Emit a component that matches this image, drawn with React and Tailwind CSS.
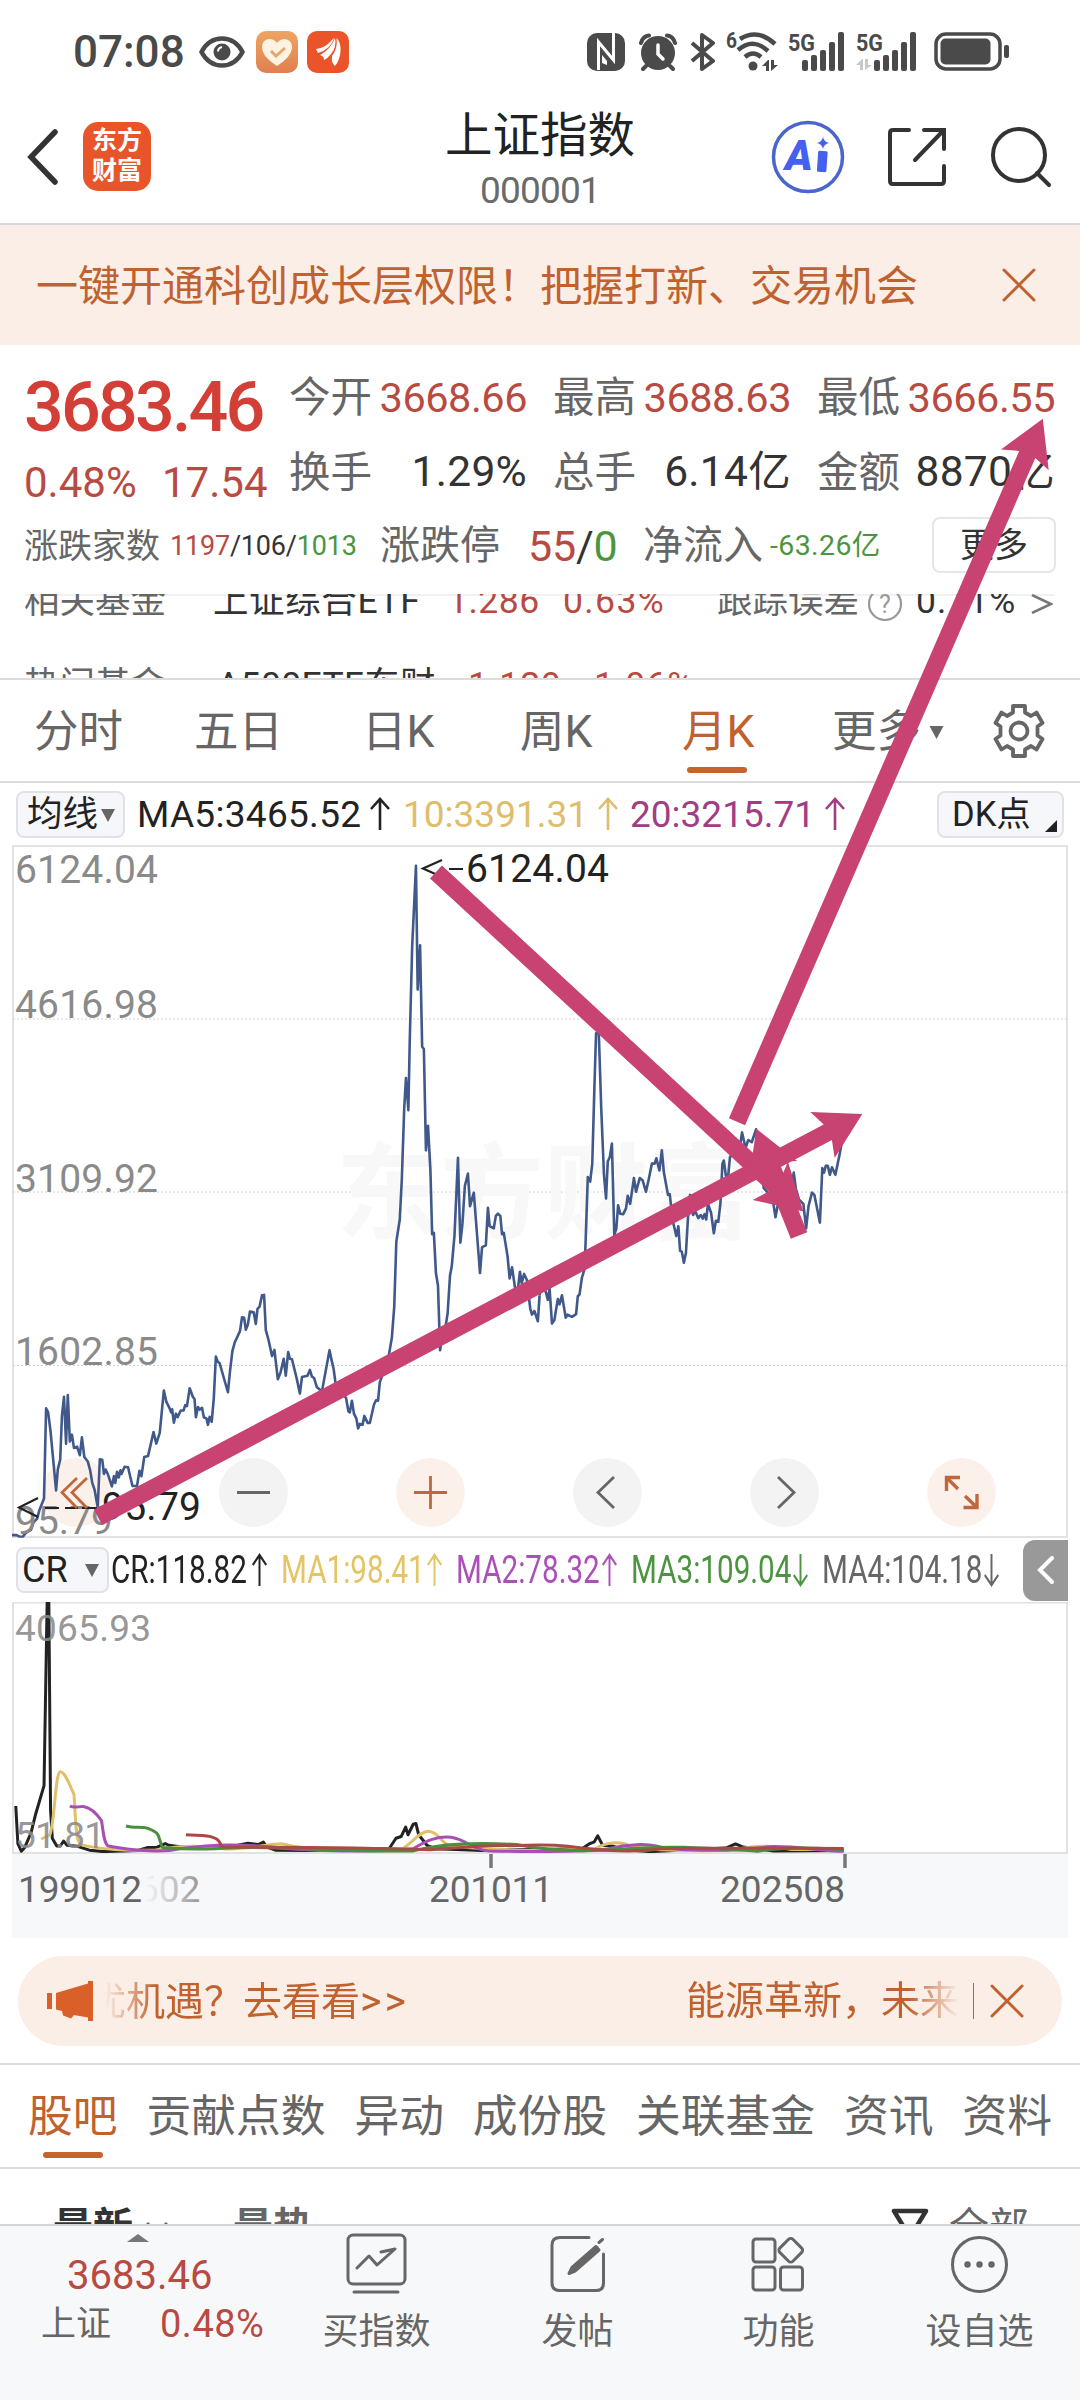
import React from 'react';
import clsx from 'clsx';

const FONT = "font-[Roboto,'Noto_Sans_CJK_SC',sans-serif]";

// Monthly close line, left and right half of the plot
const PRICE_LEFT = '35,1557 48,1557 58,1561 66,1561 75,1552 90,1545 98,1528 108,1520 115,1500 128,1475 134,1273 140,1282 147,1325 163,1457 168,1410 175,1388 180,1290 186,1247 192,1352 197,1243 203,1347 209,1332 215,1362 224,1359 232,1378 238,1338 245,1382 255,1392 262,1412 268,1440 275,1456 284,1495 290,1387 297,1388 302,1420 307,1410 313,1420 325,1448 331,1425 335,1440 340,1415 345,1428 350,1412 353,1420 362,1404 372,1405 378,1425 385,1447 398,1447 405,1413 411,1425 419,1382 430,1380 446,1326 454,1352 464,1328 476,1233 483,1258 492,1272 497,1282 500,1275 505,1305 511,1285 516,1293 525,1278 533,1278 538,1266 543,1268 551,1228 560,1247 565,1252 569,1293 575,1270 580,1276 587,1272 592,1293 600,1296 604,1310 609,1292 615,1303 621,1250 627,1157 632,1168 638,1172 662,1237 668,1190 675,1145 682,1125 697,1100 703,1069 709,1070 714,1097 720,1085 726,1056 737,1058 743,1084 748,1050 754,1045 761,1020 767,1019 772,1098 780,1120 790,1156 797,1142 807,1208 815,1192 824,1162 830,1200 837,1147 842,1162 848,1163 862,1207 871,1240 877,1203 893,1200 900,1187 906,1202 912,1205 920,1225 935,1235 957,1143 963,1165 969,1185 975,1220 1000,1245 1005,1250 1012,1280 1016,1282 1022,1256 1028,1285 1035,1296 1040,1318 1045,1308 1053,1310 1058,1290 1068,1306 1074,1306 1086,1265 1092,1255 1098,1256 1103,1215 1128,1160 1138,1115 1145,1045 1151,900 1161,850 1167,760 1174,600 1179,533 1186,605 1190,450 1197,240 1208,58 1213,335 1220,236 1226,463 1231,468 1237,695 1243,640 1250,740 1255,883 1260,880 1266,970 1272,998 1278,1143 1285,1110 1295,1085 1300,1060 1307,975 1312,955 1320,885 1330,712 1337,902 1343,860 1350,775 1359,747 1365,820 1376,790 1385,880 1394,970 1400,912 1411,908 1417,824 1422,865 1434,870 1440,842 1446,837 1453,842 1458,883 1463,880 1474,932 1480,982 1487,957 1497,1010 1505,1000 1510,967 1515,993 1522,972 1530,985 1540,1050 1545,1063 1552,1055 1562,1078 1567,1020';
const PRICE_RIGHT = '-1,1020 6,990 18,1015 23,1030 28,1005 35,1083 42,1075 52,1028 57,1040 64,1020 75,1070 80,1063 93,1068 105,1062 110,1022 115,1018 122,980 130,960 134,870 139,755 146,765 152,725 158,560 163,433 171,433 178,600 186,750 192,803 197,720 203,710 209,680 216,885 222,870 227,818 233,837 242,838 250,825 255,797 262,815 273,757 279,788 290,757 298,762 308,788 316,760 325,725 333,725 338,713 347,740 354,695 360,745 372,795 377,793 385,850 396,887 402,865 407,920 412,922 418,947 424,925 430,845 436,795 445,840 450,830 460,847 467,840 473,848 478,838 483,850 488,815 497,835 505,881 511,853 518,855 524,815 530,725 534,718 540,752 546,758 552,710 565,700 580,690 587,655 597,690 605,672 615,677 628,648 640,720 650,780 662,790 675,800 684,845 695,800 715,740 732,770 737,745 743,780 752,805 765,815 773,870 780,820 790,790 797,795 813,857 820,735 825,745 830,730 836,730 842,750 848,733 858,750 870,705 876,680';

const CR_LINES = [
    { color: '#222222', d: 'M46 1158L52 1265L62 1287L72 1276L90 1235L104 1180L128 1100L137 578L142 578L147 1170L152 1250L165 1272L175 1272L185 1258L195 1270L225 1273L260 1284L300 1288L400 1285L430 1276L455 1276L480 1265L490 1270L530 1275L600 1275L680 1272L720 1264L750 1268L765 1261L775 1275L800 1284L900 1285L1130 1280L1150 1250L1165 1245L1178 1218L1185 1240L1200 1210L1208 1208L1216 1240L1240 1270L1265 1280L1400 1285L1690 1280L1713 1265L1726 1260L1736 1243L1750 1270L1778 1272L1808 1282L1888 1288L2108 1278L2136 1266L2158 1275L2248 1286L2450 1285' },
    { color: '#e0c068', d: 'M120 1252L145 1240C160 1200 160 1065 175 1060C190 1060 205 1105 215 1125C220 1200 220 1262 235 1268C300 1285 400 1285 450 1284C520 1270 580 1268 650 1280C720 1285 780 1264 820 1266C900 1285 1000 1287 1170 1280C1200 1260 1220 1230 1245 1230C1275 1232 1280 1265 1310 1272C1500 1290 1600 1286 1728 1280C1760 1260 1800 1258 1830 1272C1900 1288 2100 1288 2150 1280C2200 1268 2240 1272 2300 1282L2450 1282' },
    { color: '#a94fb4', d: 'M203 1158C215 1165 230 1158 245 1160C270 1165 285 1185 295 1200C300 1230 302 1265 314 1272C400 1288 480 1290 520 1280C640 1265 700 1268 780 1274C900 1288 1100 1290 1200 1280C1240 1255 1270 1244 1310 1247C1360 1255 1370 1284 1420 1286C1600 1290 1700 1288 1768 1280C1820 1266 1880 1264 1918 1275C2000 1290 2180 1285 2230 1274C2300 1270 2380 1286 2450 1287' },
    { color: '#4a8f3c', d: 'M366 1215C390 1222 410 1216 430 1222C470 1238 455 1240 472 1276C560 1284 620 1280 700 1276C900 1278 1050 1290 1200 1286C1280 1265 1400 1262 1500 1268C1600 1288 1700 1290 1820 1280C1950 1270 2050 1278 2200 1287C2300 1270 2400 1280 2450 1282' },
    { color: '#aa4a44', d: 'M540 1240C570 1243 600 1240 620 1248C645 1256 635 1268 648 1275C800 1276 1000 1274 1250 1283C1350 1275 1420 1270 1480 1271C1600 1266 1640 1270 1690 1278C1780 1288 1850 1290 1920 1280C2020 1276 2100 1280 2200 1278L2450 1279' },
];

const QUOTES = [
    [
        { label: '今开', value: '3668.66', up: true },
        { label: '最高', value: '3688.63', up: true },
        { label: '最低', value: '3666.55', up: true },
    ],
    [
        { label: '换手', value: '1.29%' },
        { label: '总手', value: '6.14亿' },
        { label: '金额', value: '8870亿' },
    ],
];

const ARROWS = [
    { from: [436, 872], to: [803.4, 1211.4] },
    { from: [799, 1235.5], to: [756.3, 1128.8] },
    { from: [98, 1517.3], to: [862.3, 1114] },
    { from: [737, 1121.7], to: [1042.8, 418.7] },
];

function arrowPoints({ from: [x1, y1], to: [x2, y2] }) {
    const len = Math.hypot(x2 - x1, y2 - y1);
    const dx = (x2 - x1) / len;
    const dy = (y2 - y1) / len;
    const at = (along, side) => `${x1 + dx * along - dy * side},${y1 + dy * along + dx * side}`;
    const neck = len - 39;
    return [at(0, -8.8), at(neck, -8.8), at(len - 45, -26), at(len, 0), at(len - 45, 26), at(neck, 8.8), at(0, 8.8)].join(' ');
}

function Cross({ className }) {
    return (
        <svg viewBox="0 0 34 34" fill="none" stroke="#c0622f" strokeWidth="3" strokeLinecap="round" className={className}>
            <path d="M2 2L32 32M32 2L2 32" />
        </svg>
    );
}

function Trend({ down, className }) {
    return (
        <svg viewBox="0 0 20 34" preserveAspectRatio="none" fill="none" stroke="currentColor" strokeWidth="2.6" className={clsx('h-[34px] shrink-0', down && 'rotate-180', className)}>
            <path d="M10 33V2M1 12L10 2L19 12" />
        </svg>
    );
}

function Caret({ className }) {
    return (
        <svg viewBox="0 0 14 13" fill="#666" className={clsx('shrink-0', className)}>
            <path d="M0 0H14L7 13Z" />
        </svg>
    );
}

function Signal({ idle }) {
    return (
        <svg viewBox="0 0 64 40" className="h-10 w-16 shrink-0 overflow-visible" fill="#4a4a4a">
            <text x="0" y="19" fontSize="24" fontWeight="700" textLength="27" lengthAdjust="spacingAndGlyphs">5G</text>
            {idle && <path d="M6 27L0 33H4V38H7V27ZM9 27V38L16 33H12V27Z" fill="#c8c8c8" />}
            <rect x={idle ? 18 : 14} y="28" width="6" height="11" rx="2" />
            <rect x={idle ? 27 : 23} y="23" width="6" height="16" rx="2" />
            <rect x={idle ? 36 : 32} y="18" width="6" height="21" rx="2" />
            <rect x={idle ? 45 : 41} y="10" width="6" height="29" rx="2" />
            <rect x={idle ? 54 : 50} y="0" width="6" height="39" rx="2" />
        </svg>
    );
}

function StatusBar() {
    return (
        <div className="flex h-[104px] items-center pl-[73px] text-[#4a4a4a]">
            <span className="w-[126px] text-[44px] font-medium leading-none">07:08</span>
            <svg viewBox="0 0 46 32" className="h-8 w-[46px]" fill="none" stroke="#4a4a4a">
                <path d="M2.5 16C12 -2 34 -2 43.5 16C34 34 12 34 2.5 16Z" strokeWidth="4.5" />
                <circle cx="23" cy="16" r="8.5" fill="#4a4a4a" stroke="none" />
                <path d="M19 15.500A5 5 0 0 1 23 11" stroke="#fff" strokeWidth="2" />
            </svg>
            <svg viewBox="0 0 42 42" className="ml-[11px] size-[42px]">
                <defs>
                    <linearGradient id="heart" x1="0" y1="0" x2="0" y2="1">
                        <stop offset="0" stopColor="#eda562" />
                        <stop offset="1" stopColor="#e0804e" />
                    </linearGradient>
                </defs>
                <rect width="42" height="42" rx="10" fill="url(#heart)" />
                <path d="M21 35C12 29 6 23 6 16C6 8 16 5 21 12C26 5 36 8 36 16C36 23 30 29 21 35Z" fill="#fdf3e2" />
                <path d="M15 20L20 25L29 17" fill="none" stroke="#e3a86b" strokeWidth="3" />
            </svg>
            <svg viewBox="0 0 42 42" className="ml-[9px] size-[42px]">
                <rect width="42" height="42" rx="10" fill="#ea5428" />
                <path d="M9 18Q17 17 22 12Q25 9 27 7Q24 18 11 22ZM13 24Q24 18 28 7Q30 16 24 23Q21 27 17 29Q17 25 13 24ZM25 25Q31 17 29.500 7Q34 11 33.500 20Q33 29 28 35Q24 32 25 25Z" fill="#fff" />
            </svg>

            <svg viewBox="0 0 38 38" className="ml-[238px] size-[38px]">
                <rect width="38" height="38" rx="10" fill="#4a4a4a" />
                <path d="M11.500 38V10L26.500 28V0" fill="none" stroke="#fff" strokeWidth="3" transform="translate(0 -1)" />
                <path d="M15 22V30L20 32V28Z" fill="#fff" />
            </svg>
            <svg viewBox="0 0 38 38" className="ml-[14px] size-[38px]" fill="none" stroke="#4a4a4a" strokeLinecap="round">
                <circle cx="19" cy="20" r="17" fill="#4a4a4a" stroke="none" />
                <path d="M2 10Q4 3 10 2.500M36 10Q34 3 28 2.500M7 33L4 36M31 33L34 36" strokeWidth="4" />
                <path d="M19 12V21L24 26" stroke="#fff" strokeWidth="3.500" />
            </svg>
            <svg viewBox="0 0 26 38" className="ml-[13px] h-[38px] w-[26px]" fill="none" stroke="#4a4a4a" strokeWidth="4" strokeLinejoin="round">
                <path d="M2 10L23 28L12 36V2L23 10L2 28" />
            </svg>
            <svg viewBox="0 0 52 42" className="ml-[10px] h-[42px] w-[52px] overflow-visible" fill="none" stroke="#4a4a4a">
                <text x="0" y="17" fontSize="22" fontWeight="700" fill="#4a4a4a" stroke="none" textLength="11" lengthAdjust="spacingAndGlyphs">6</text>
                <path d="M14 8Q32 -3 49 13M12 19Q27 6 42 20M19 26Q27 19 35 26" strokeWidth="4.500" />
                <circle cx="27" cy="35" r="4.500" fill="#4a4a4a" stroke="none" />
                <path d="M42 29L36 35H40V40H43V29ZM45 29V40L52 34H48V29Z" fill="#4a4a4a" stroke="none" />
            </svg>
            <div className="ml-[10px] flex gap-1">
                <Signal />
                <Signal idle />
            </div>
            <svg viewBox="0 0 76 40" className="ml-[14px] h-10 w-[76px]">
                <rect x="2" y="2" width="64" height="35" rx="10" fill="none" stroke="#4a4a4a" strokeWidth="3.500" />
                <rect x="6.500" y="6.500" width="50" height="26" rx="5" fill="#4a4a4a" />
                <rect x="70" y="13" width="5" height="13" rx="2" fill="#4a4a4a" />
            </svg>
        </div>
    );
}

function Header() {
    return (
        <header className="flex h-[121px] items-start border-b-2 border-[#d5d7de]">
            <div className="flex w-[309px] items-center pl-[27px] pt-[18px]">
                <svg viewBox="0 0 32 56" className="h-14 w-8" fill="none" stroke="#333" strokeWidth="5.500" strokeLinecap="round">
                    <path d="M28 3L4 28L28 53" />
                </svg>
                <div className="ml-6 flex h-[69px] w-[68px] flex-col items-center justify-center rounded-[15px] bg-[#e9552a] pb-0.5 text-[25px] font-bold leading-[30px] text-white">
                    <span>东方</span>
                    <span>财富</span>
                </div>
            </div>
            <div className="flex flex-1 flex-col items-center">
                <h1 className="mt-[7px] text-[47.5px] leading-[50px] text-[#222]">上证指数</h1>
                <span className="mt-[10px] text-[37px] leading-[40px] tracking-[-0.8px] text-[#6a6a6a]">000001</span>
            </div>
            <div className="flex w-[309px] items-center pt-4">
                <svg viewBox="0 0 74 74" className="size-[74px]">
                    <circle cx="37" cy="37" r="34.500" fill="none" stroke="#4a66cc" strokeWidth="3.500" />
                    <text x="14" y="50" fontSize="42" fontWeight="900" fontStyle="italic" fill="#4560ee">A</text>
                    <rect x="46.500" y="31" width="9.500" height="21" rx="1.500" fill="#4560ee" transform="rotate(4 51 42)" />
                    <path d="M52 17Q53 22 58 23Q53 24 52 29Q51 24 46 23Q51 22 52 17Z" fill="#4560ee" />
                </svg>
                <svg viewBox="0 0 60 60" className="ml-[42px] size-[60px]" fill="none" stroke="#333" strokeWidth="4" strokeLinecap="round">
                    <path d="M22 3H6Q3 3 3 6V54Q3 57 6 57H54Q57 57 57 54V39M37 3H57V22M55 5L28 33" />
                </svg>
                <svg viewBox="0 0 62 62" className="ml-[43px] size-[62px]" fill="none" stroke="#333" strokeWidth="4" strokeLinecap="round">
                    <circle cx="29" cy="29" r="26" />
                    <path d="M47 47L59 59" />
                </svg>
            </div>
        </header>
    );
}

function Quote() {
    return (
        <section className="h-[249px]">
            <div className="flex h-[165px]">
                <div className="w-[289px] pl-[24px]">
                    <div className="mt-[22px] flex h-20 items-center text-[70px] font-medium leading-none tracking-[-2.8px] text-[#d33f36]">3683.46</div>
                    <div className="flex h-[72px] items-center text-[42px] leading-none text-[#b84a42]">
                        <span className="w-[138px]">0.48%</span>
                        <span>17.54</span>
                    </div>
                </div>
                <div className="pt-[15px]">
                    {QUOTES.map((row, i) => (
                        <div key={i} className="flex h-[75px] gap-[26px]">
                            {row.map((q) => (
                                <div key={q.label} className="flex w-[238px] items-center justify-between whitespace-nowrap text-[41.5px] leading-none">
                                    <span className="text-[#666]">{q.label}</span>
                                    <span className={clsx(q.up ? 'tracking-[-0.500px] text-[#b84a42]' : 'text-[42.500px] tracking-[0.300px] text-[#333]')}>{q.value}</span>
                                </div>
                            ))}
                        </div>
                    ))}
                </div>
            </div>
            <div className="flex h-[72px] items-center whitespace-nowrap pl-6 leading-none">
                <span className="w-[146px] text-[34px] text-[#666]">涨跌家数</span>
                <span className="w-[210px] text-[27px] tracking-[-0.2px] text-[#333]">
                    <span className="text-[#b84a42]">1197</span>/106/<span className="text-[#4c9440]">1013</span>
                </span>
                <span className="w-[148px] text-[40px] text-[#666]">涨跌停</span>
                <span className="w-[115px] text-[43px] tracking-[-0.2px] text-[#333]">
                    <span className="text-[#b84a42]">55</span>/<span className="text-[#4c9440]">0</span>
                </span>
                <span className="w-[127px] text-[40px] text-[#666]">净流入</span>
                <span className="w-[162px] text-[28.500px] tracking-[0.400px] text-[#4c9440]">-63.26亿</span>
                <button className="-mt-0.5 h-[56px] w-[124px] rounded-lg border-2 border-[#e6e6e6] text-[34px] leading-none text-[#333]">更多</button>
            </div>
        </section>
    );
}

function Funds() {
    return (
        <section className="h-[84px] overflow-hidden">
            <div className="mx-[25px] h-0.5 bg-[#f1f1f1]" />
            <div className="-mt-[36px] whitespace-nowrap text-[35.500px] leading-none text-[#333]">
                <div className="flex h-[84px] items-center pl-6">
                    <span className="w-[189px] text-[#666]">相关基金</span>
                    <span className="w-[235px] tracking-[0.600px]">上证综合ETF</span>
                    <span className="w-[115px] tracking-[0.500px] text-[#b84a42]">1.286</span>
                    <span className="w-[154px] tracking-[1.400px] text-[#b84a42]">0.63%</span>
                    <span className="w-[150px] text-[#666]">跟踪误差</span>
                    <svg viewBox="0 0 36 36" className="mt-1 size-9" fill="none" stroke="#999" strokeWidth="2.200">
                        <circle cx="18" cy="18" r="16" />
                        <text x="18" y="27" fontSize="25" textAnchor="middle" fill="#999" stroke="none">?</text>
                    </svg>
                    <span className="ml-[13px] w-[115px] tracking-[1px]">0.11%</span>
                    <svg viewBox="0 0 22 20" className="mt-1 h-5 w-[22px]" fill="none" stroke="#777" strokeWidth="2.500">
                        <path d="M1 1L20 10L1 19" />
                    </svg>
                </div>
                <div className="flex h-[84px] items-center pl-6">
                    <span className="w-[193px] text-[#666]">热门基金</span>
                    <span className="w-[251px] tracking-[0.400px]">A500ETF东财</span>
                    <span className="w-[126px] tracking-[1px] text-[#b84a42]">1.129</span>
                    <span className="w-[440px] tracking-[1px] text-[#b84a42]">1.06%</span>
                    <svg viewBox="0 0 22 20" className="mt-1 h-5 w-[22px]" fill="none" stroke="#777" strokeWidth="2.500">
                        <path d="M1 1L20 10L1 19" />
                    </svg>
                </div>
            </div>
        </section>
    );
}

function PeriodTabs() {
    return (
        <nav className="flex h-[105px] items-center whitespace-nowrap border-y-2 border-[#dcdcdc] pl-[34px] pt-[3px] text-[44.500px] leading-none text-[#666]">
            <span className="w-[160px]">分时</span>
            <span className="w-[168px]">五日</span>
            <span className="w-[158px]">日K</span>
            <span className="w-[162px]">周K</span>
            <span className="relative w-[150px] text-[#c0622f]">
                月K
                <i className="absolute -bottom-[19px] left-[5px] h-[6px] w-[60px] rounded-full bg-[#c5642f]" />
            </span>
            <span className="w-[97px]">更多</span>
            <Caret className="h-[13px] w-[15px]" />
            <svg viewBox="0 0 52 54" className="-mt-[3px] ml-[49px] h-[54px] w-[52px]" fill="none" stroke="#666" strokeWidth="3.800" strokeLinejoin="round">
                <path d="M20 2H32V8.500L38 12L43.500 8.500L49.500 19L44.500 22.500V31.500L49.500 35L43.500 45.500L38 42L32 45.500V52H20V45.500L14 42L8.500 45.500L2.500 35L7.500 31.500V22.500L2.500 19L8.500 8.500L14 12L20 8.500Z" />
                <circle cx="26" cy="27" r="8.500" />
            </svg>
        </nav>
    );
}

function PriceChart() {
    return (
        <svg viewBox="0 845 1080 693" className="block h-[693px] w-[1080px] overflow-visible" fill="none">
            <path d="M13 1537V846H1067V1537Z" stroke="#e2e2e2" strokeWidth="2" />
            <path d="M13 1019H1067M13 1192H1067M13 1365.500H1067" stroke="#d2d2d2" strokeDasharray="2 2" />
            <text x="336" y="1231" fontSize="104" fontWeight="700" fill="#f8f8f8">东方财富</text>
            {[253.4, 607.5, 784.5].map((cx) => (
                <circle key={cx} cx={cx} cy="1492.500" r="34.400" fill="#f3f3f3" />
            ))}
            {[76.5, 430.5, 961.5].map((cx) => (
                <circle key={cx} cx={cx} cy="1492.500" r="34.400" fill="#fbf1ea" />
            ))}
            <svg x="12" y="845.800" width="1055.500" height="692" viewBox="35 13 3065 1550" preserveAspectRatio="none" stroke="#40598a" strokeWidth="2.600" strokeLinejoin="round">
                <polyline points={PRICE_LEFT} vectorEffect="non-scaling-stroke" />
                <polyline points={PRICE_RIGHT} transform="translate(1568 0)" vectorEffect="non-scaling-stroke" />
            </svg>
            <g fill="#8a8a8a" fontSize="39">
                <text x="15" y="883" textLength="143">6124.04</text>
                <text x="15" y="1018" textLength="143">4616.98</text>
                <text x="15" y="1192" textLength="143">3109.92</text>
                <text x="15" y="1365" textLength="143">1602.85</text>
                <text x="15" y="1533.500" textLength="98">95.79</text>
            </g>
            <g fill="#222" fontSize="39">
                <text x="466" y="881.500" textLength="143">6124.04</text>
                <text x="102" y="1520" textLength="99">95.79</text>
            </g>
            <path d="M442 860L423 868.500L442 877M449 869H463M38 1498L19 1507.500L38 1517M45 1508H59M65 1508H78M82 1508H97" stroke="#222" strokeWidth="2.200" />
            <path d="M77 1478L62 1492.500L77 1508M87 1478L72 1492.500L87 1508M414 1492.500H447M430.500 1476V1509" stroke="#c0683c" strokeWidth="2.800" />
            <path d="M237 1492.500H270M614 1477L598 1492.500L614 1508M778 1477L794 1492.500L778 1508" stroke="#666" strokeWidth="2.800" />
            <path d="M946.500 1491V1477.500H960M947 1478L958 1489M977 1494V1507.500H963.500M976.500 1507L965 1496" stroke="#c0683c" strokeWidth="3.400" />
        </svg>
    );
}

function MaRow() {
    return (
        <div className="flex h-[62px] items-center whitespace-nowrap pl-4 text-[37px] leading-none">
            <div className="flex h-[47px] w-[109px] items-center rounded-lg border-2 border-[#e0e2e8] bg-[#f6f7fa] pl-[9px] pt-0.5 text-[35.500px] text-[#222]">
                均线
                <Caret className="ml-[3px] h-[13px] w-[14px]" />
            </div>
            <span className="ml-[12px] w-[233px] tracking-[0.300px] text-[#222]">MA5:3465.52</span>
            <Trend className="w-5 text-[#222]" />
            <span className="ml-[13px] w-[195px] text-[#e0bd6a]">10:3391.31</span>
            <Trend className="w-5 text-[#e0bd6a]" />
            <span className="ml-[12px] w-[195px] text-[#a13d84]">20:3215.71</span>
            <Trend className="w-5 text-[#a13d84]" />
            <div className="relative ml-[92px] flex h-[47px] w-[127px] items-center rounded-lg border-2 border-[#e0e2e8] bg-[#f6f7fa] pl-[13px] text-[34.500px] text-[#222]">
                DK点
                <svg viewBox="0 0 12 12" className="absolute bottom-1 right-[5px] size-3" fill="#222">
                    <path d="M12 0V12H0Z" />
                </svg>
            </div>
        </div>
    );
}

function CrItem({ width, text, color, down }) {
    return (
        <div className={clsx('flex items-center', width, color)}>
            <span className="mr-auto w-0">
                <span className="inline-block origin-left scale-x-[0.76]">{text}</span>
            </span>
            <Trend down={down} className="mr-[14px] w-[15px]" />
        </div>
    );
}

function CrRow() {
    return (
        <div className="flex h-[64px] items-center whitespace-nowrap pl-4 text-[39px] leading-none">
            <div className="flex h-[46px] w-[93px] items-center justify-between rounded-lg border-2 border-[#e0e2e8] bg-[#f6f7fa] pl-1 pr-2 text-[36px] text-[#222]">
                CR
                <Caret className="h-[13px] w-[14px]" />
            </div>
            <div className="flex w-[911px] pl-0.5">
                <CrItem width="w-[170px]" color="text-[#222]" text="CR:118.82" />
                <CrItem width="w-[175px]" color="text-[#e3c566]" text="MA1:98.41" />
                <CrItem width="w-[175px]" color="text-[#ab50b8]" text="MA2:78.32" />
                <CrItem width="w-[191px]" color="text-[#4c9440]" text="MA3:109.04" down />
                <CrItem width="w-[191px]" color="text-[#666]" text="MA4:104.18" down />
            </div>
            <div className="ml-[3px] flex h-[61px] w-[45px] items-center justify-center rounded-l-xl bg-[#999]">
                <svg viewBox="0 0 18 28" className="h-7 w-[18px]" fill="none" stroke="#fff" strokeWidth="4" strokeLinecap="round">
                    <path d="M15 2L3 14L15 26" />
                </svg>
            </div>
        </div>
    );
}

function CrChart() {
    return (
        <svg viewBox="0 1602 1080 336" className="block h-[336px] w-[1080px]" fill="none">
            <defs>
                <linearGradient id="fade" x1="145" x2="199" y1="0" y2="0" gradientUnits="userSpaceOnUse">
                    <stop offset="0" stopColor="#f7f8fa" />
                    <stop offset="1" stopColor="#999" />
                </linearGradient>
            </defs>
            <rect x="12" y="1853" width="1056" height="85" fill="#f7f8fa" />
            <path d="M13 1853V1602.500H1067V1853Z" stroke="#e2e2e2" strokeWidth="2" />
            <svg x="12" y="1602" width="1055.500" height="251" viewBox="35 576 3065 716" preserveAspectRatio="none" strokeWidth="3" strokeLinejoin="round">
                {CR_LINES.map((line) => (
                    <path key={line.color} d={line.d} stroke={line.color} vectorEffect="non-scaling-stroke" />
                ))}
            </svg>
            <g fill="#8a8a8a" fillOpacity="0.9" fontSize="37">
                <text x="15" y="1640.500" textLength="136">4065.93</text>
                <text x="15" y="1848" textLength="90">51.81</text>
            </g>
            <g fill="#666" fontSize="37">
                <text x="138" y="1901.500" fill="url(#fade)">602</text>
                <text x="18" y="1901.500" textLength="124">199012</text>
                <text x="429" y="1901.500" textLength="124">201011</text>
                <text x="720" y="1901.500" textLength="125">202508</text>
            </g>
            <path d="M491 1854V1868M845 1854V1868" stroke="#777" strokeWidth="3.500" />
        </svg>
    );
}

function Notice() {
    return (
        <div className="mx-[18px] mt-[18px] flex h-[90px] items-center overflow-hidden whitespace-nowrap rounded-full bg-[#fbeee6] pl-[29px] text-[39px] leading-none text-[#c0622f]">
            <svg viewBox="0 0 46 40" className="h-10 w-[46px] shrink-0" fill="#da602a">
                <path d="M0 12H5V28H0ZM9 12L41 2.500V0H46V40H41V36.500L27 34L24 37.500L16 34.500L15 30L9 28.500Z" />
            </svg>
            <div className="ml-[12px] flex w-[304px] justify-end overflow-hidden [mask-image:linear-gradient(to_right,transparent,black_50px)]">
                <span className="leading-[56px]">优机遇？去看看<span className="text-[41px] tracking-[3px]">&gt;&gt;</span></span>
            </div>
            <div className="ml-[277px] w-[273px] [mask-image:linear-gradient(to_left,transparent,black_50px)]">
                <span className="leading-[56px]">能源革新，未来</span>
            </div>
            <i className="ml-[14px] h-9 w-px bg-[#c0622f]" />
            <Cross className="ml-4 size-[34px]" />
        </div>
    );
}

const SECTION_TABS = ['股吧', '贡献点数', '异动', '成份股', '关联基金', '资讯', '资料'];

function SectionTabs() {
    return (
        <nav className="mt-[17px] flex h-[106px] items-center justify-between whitespace-nowrap border-y-2 border-[#dcdcdc] pl-7 pr-7 pt-0.5 text-[44.800px] leading-none text-[#666]">
            {SECTION_TABS.map((tab, i) => (
                <span key={tab} className={clsx('relative', i === 0 && 'text-[#c0622f]')}>
                    {tab}
                    {i === 0 && <i className="absolute -bottom-[19px] left-[15px] h-[6px] w-[60px] rounded-full bg-[#c5642f]" />}
                </span>
            ))}
        </nav>
    );
}

function FeedFilter() {
    return (
        <div className="h-[55px] overflow-hidden">
            <div className="mt-[37px] flex h-11 items-center whitespace-nowrap pl-[53px] text-[40px] leading-none text-[#666]">
                <span className="font-bold text-[#333]">最新</span>
                <svg viewBox="0 0 24 14" className="ml-3 h-[14px] w-6" fill="none" stroke="#666" strokeWidth="3">
                    <path d="M2 2L12 12L22 2" />
                </svg>
                <span className="ml-[64px] font-bold">最热</span>
                <svg viewBox="0 0 40 40" className="ml-[577px] size-10" fill="none" stroke="#333" strokeWidth="4.500" strokeLinejoin="round">
                    <path d="M4 3H36L25 21V36L15 30V21Z" />
                </svg>
                <span className="ml-[19px]">全部</span>
            </div>
        </div>
    );
}

const NAV_ICONS = {
    买指数: (
        <>
            <rect x="2" y="2" width="57" height="49" rx="5" />
            <path d="M11 35L23 23L31 32L49 16L35 19M8 59H52" />
        </>
    ),
    发帖: (
        <>
            <path d="M42 4.500H13Q5 4.500 5 12V50Q5 57.500 13 57.500H49Q56.500 57.500 56.500 50V21" />
            <path d="M49 13.500L52 17L28 38L22 40.500L25 34.500ZM52 9.500L55.500 6.500" fill="#666" />
        </>
    ),
    功能: (
        <>
            <rect x="5" y="6" width="22" height="23" rx="3" />
            <rect x="5" y="34" width="22" height="23" rx="3" />
            <rect x="32.500" y="34" width="22" height="23" rx="3" />
            <rect x="33.500" y="8" width="18.500" height="18.500" rx="3" transform="rotate(45 42.750 17.250)" />
        </>
    ),
    设自选: (
        <>
            <circle cx="30.500" cy="31.500" r="27" />
            <g fill="#666" stroke="none">
                <circle cx="18.500" cy="31.500" r="3.200" />
                <circle cx="30.500" cy="31.500" r="3.200" />
                <circle cx="42.500" cy="31.500" r="3.200" />
            </g>
        </>
    ),
};

function BottomNav() {
    return (
        <footer className="flex h-[176px] border-t-2 border-[#d3d5d9] bg-[#f7f8fa] leading-none">
            <div className="w-[276px]">
                <svg viewBox="0 0 22 8" className="ml-[127px] mt-2 h-2 w-[22px]" fill="#777">
                    <path d="M11 0L22 8H0Z" />
                </svg>
                <div className="mt-[14px] pl-[67px] text-[40px] text-[#b84a42]">3683.46</div>
                <div className="mt-[8px] flex h-10 items-center whitespace-nowrap pl-[41px]">
                    <span className="w-[119px] text-[35px] text-[#666]">上证</span>
                    <span className="text-[38px] tracking-[0.500px] text-[#b84a42]">0.48%</span>
                </div>
            </div>
            {Object.entries(NAV_ICONS).map(([label, icon]) => (
                <div key={label} className="flex w-[201px] flex-col items-center pt-[7px] text-[36px] text-[#666]">
                    <svg viewBox="0 0 61 62" className="h-[62px] w-[61px]" fill="none" stroke="#666" strokeWidth="3" strokeLinecap="round" strokeLinejoin="round">
                        {icon}
                    </svg>
                    <span className="mt-[19px]">{label}</span>
                </div>
            ))}
        </footer>
    );
}

export default function App() {
    return (
        <div className={clsx('relative h-[2400px] w-[1080px] overflow-hidden bg-white', FONT)}>
            <StatusBar />
            <Header />
            <div className="flex h-[120px] items-center justify-between bg-[#fbeee6] pl-9 pr-[44px] text-[42px] leading-none text-[#c0622f]">
                <span className="pt-[3px]">一键开通科创成长层权限！把握打新、交易机会</span>
                <Cross className="size-[34px]" />
            </div>
            <Quote />
            <Funds />
            <PeriodTabs />
            <MaRow />
            <PriceChart />
            <CrRow />
            <CrChart />
            <Notice />
            <SectionTabs />
            <FeedFilter />
            <BottomNav />

            {/* Hand-drawn trend arrows */}
            <svg viewBox="0 0 1080 2400" className="pointer-events-none absolute inset-0 h-[2400px] w-[1080px]" fill="#c84272">
                {ARROWS.map((arrow, i) => (
                    <polygon key={i} points={arrowPoints(arrow)} />
                ))}
            </svg>
        </div>
    );
}
